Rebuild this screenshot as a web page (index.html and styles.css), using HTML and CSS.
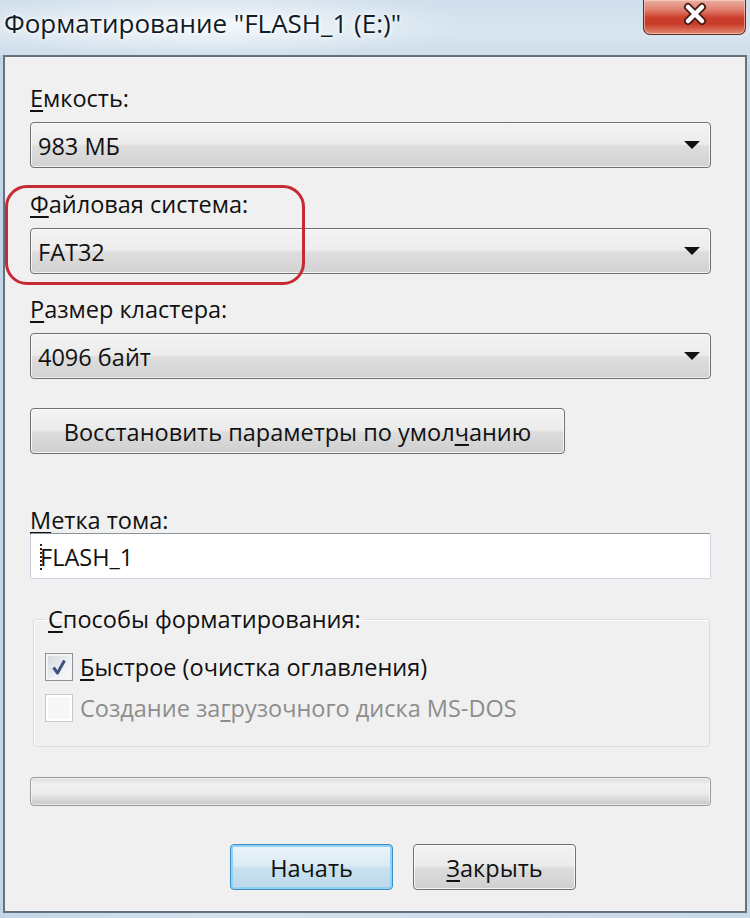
FILE: index.html
```html
<!DOCTYPE html>
<html lang="ru">
<head>
<meta charset="utf-8">
<title>Форматирование</title>
<link rel="stylesheet" href="styles.css">
</head>
<body>
<div class="window">
  <div class="titlebar">
    <span class="title">Форматирование "FLASH_1 (E:)"</span>
    <div class="close" aria-label="Закрыть">
      <svg width="30" height="24" viewBox="0 0 30 24">
        <path d="M8 5 L22 19 M22 5 L8 19" stroke="#4a1a16" stroke-width="8" stroke-linecap="round" fill="none"/>
        <path d="M8 5 L22 19 M22 5 L8 19" stroke="#ffffff" stroke-width="4.5" stroke-linecap="round" fill="none"/>
      </svg>
    </div>
  </div>
  <div class="client">
    <div class="field">
      <div class="label"><u>Е</u>мкость:</div>
      <div class="combo"><span class="combo-text">983 МБ</span><span class="arrow"></span></div>
    </div>
    <div class="field field-marked">
      <div class="label"><u>Ф</u>айловая система:</div>
      <div class="combo"><span class="combo-text">FAT32</span><span class="arrow"></span></div>
      <div class="highlight"></div>
    </div>
    <div class="field">
      <div class="label"><u>Р</u>азмер кластера:</div>
      <div class="combo"><span class="combo-text">4096 байт</span><span class="arrow"></span></div>
    </div>
    <div class="btn btn-reset">Восстановить параметры по умол<u>ч</u>анию</div>
    <div class="label label-volume"><u>М</u>етка тома:</div>
    <div class="textbox"><span class="caret"></span>FLASH_1</div>
    <fieldset class="group">
      <legend><u>С</u>пособы форматирования:</legend>
      <div class="check-row">
        <span class="checkbox checked">
          <svg width="20" height="20" viewBox="0 0 20 20"><path d="M4.5 10.5 L8.5 16 L15.5 3.5" stroke="#3d5380" stroke-width="3" fill="none" stroke-linejoin="round"/></svg>
        </span>
        <span class="check-label"><u>Б</u>ыстрое (очистка оглавления)</span>
      </div>
      <div class="check-row disabled">
        <span class="checkbox"></span>
        <span class="check-label">Создание за<u>г</u>рузочного диска MS-DOS</span>
      </div>
    </fieldset>
    <div class="progress"></div>
    <div class="actions">
      <div class="btn btn-default">Начать</div>
      <div class="btn btn-close"><u>З</u>акрыть</div>
    </div>
  </div>
</div>
</body>
</html>
```

FILE: styles.css
```css
* { box-sizing: border-box; }
html, body { margin: 0; padding: 0; }
body {
  width: 750px;
  height: 918px;
  overflow: hidden;
  font-family: "Open Sans", "Noto Sans", "DejaVu Sans", sans-serif;
  color: #111111;
  background: #cfdeeb;
}
u { text-decoration: underline; text-decoration-thickness: 2px; text-underline-offset: 3px; }

.window {
  width: 750px;
  height: 918px;
  display: flex;
  flex-direction: column;
  background: linear-gradient(90deg, #c3d6e7 0%, #d3e2ee 30%, #cddcea 70%, #c8d9e8 100%);
}

.titlebar {
  height: 55px;
  display: flex;
  align-items: flex-start;
  background:
    radial-gradient(ellipse 260px 34px at 210px 24px, rgba(255,255,255,0.75), rgba(255,255,255,0) 100%),
    linear-gradient(180deg, #d0dfec 0%, #d7e5f0 60%, #cfdeeb 100%);
}
.title {
  font-size: 26px;
  line-height: 30px;
  padding: 8px 0 0 4px;
  color: #101c28;
  text-shadow: 0 0 6px #ffffff, 0 0 3px #ffffff;
  white-space: nowrap;
}
.close {
  margin-left: auto;
  margin-right: 4px;
  width: 103px;
  height: 35px;
  border: 1px solid #5b2a24;
  border-top: none;
  border-radius: 0 0 7px 7px;
  background: linear-gradient(180deg, #eab0a2 0%, #e07d6c 30%, #cc3f2c 52%, #c73b28 70%, #e4896f 100%);
  box-shadow: inset 0 0 0 1px rgba(255,220,210,0.55);
  display: flex;
  align-items: center;
  justify-content: center;
  padding-bottom: 6px;
}

.client {
  flex: 1;
  margin: 0 3px 5px 3px;
  border: 2px solid #66727d;
  background: #f0f0f0;
  padding: 27px 34px 0 25px;
  display: flex;
  flex-direction: column;
  font-size: 23.5px;
}

.label {
  height: 28px;
  line-height: 28px;
  white-space: nowrap;
}
.field { position: relative; }
.field + .field { margin-top: 21.5px; }

.combo {
  margin-top: 10px;
  height: 46px;
  border: 1px solid #707070;
  border-radius: 4px;
  background: linear-gradient(180deg, #f3f3f3 0%, #ececec 48%, #dedede 52%, #d2d2d2 100%);
  box-shadow: inset 0 0 0 1px rgba(255,255,255,0.7);
  display: flex;
  align-items: center;
  padding: 2px 10px 0 7px;
}
.combo-text { flex: 1; line-height: 30px; }
.arrow {
  width: 0;
  height: 0;
  border-left: 8px solid transparent;
  border-right: 8px solid transparent;
  border-top: 8px solid #111;
  margin-top: -2px;
}

.highlight {
  position: absolute;
  left: -25px;
  top: -4.5px;
  width: 300px;
  height: 100px;
  border: 3px solid #c62a35;
  border-radius: 22px;
  pointer-events: none;
}

.btn {
  height: 46px;
  border: 1px solid #707070;
  border-radius: 4px;
  background: linear-gradient(180deg, #f3f3f3 0%, #ebebeb 48%, #dddddd 52%, #cfcfcf 100%);
  box-shadow: inset 0 0 0 1px rgba(255,255,255,0.75);
  display: flex;
  align-items: center;
  justify-content: center;
  white-space: nowrap;
  padding-top: 1px;
}
.btn-reset {
  margin-top: 29px;
  width: 535px;
}

.label-volume {
  margin-top: 52px;
  height: 27px;
}
.textbox {
  height: 46px;
  background: #ffffff;
  border: 1px solid #c9d6e2;
  border-top-color: #8c949c;
  border-left-color: #c4cfda;
  border-radius: 2px;
  display: flex;
  align-items: center;
  padding: 2px 0 0 9px;
  line-height: 30px;
}
.caret {
  width: 0;
  height: 26px;
  border-left: 2px dotted #222;
  margin-right: -2px;
}

.group {
  margin: 26px 0 0 3px;
  width: 677px;
  border: 1px solid #d5dfe5;
  border-radius: 3px;
  padding: 20px 0 24px 11px;
  box-shadow: 1px 1px 0 #ffffff inset;
  min-width: 0;
}
.group legend {
  padding: 0 3px;
  line-height: 28px;
  height: 28px;
  white-space: nowrap;
}
.check-row {
  display: flex;
  align-items: center;
  height: 28px;
  gap: 7px;
}
.check-row + .check-row { margin-top: 13px; }
.checkbox {
  width: 28px;
  height: 28px;
  flex: none;
  border: 1px solid #8e939a;
  background: linear-gradient(135deg, #d3d8de 0%, #eef0f3 60%, #fafafa 100%);
  box-shadow: inset 0 0 0 2px #f4f4f4;
  display: flex;
  align-items: center;
  justify-content: center;
}
.check-label { white-space: nowrap; line-height: 28px; }
.disabled .checkbox {
  border-color: #c8c8c8;
  background: #f7f7f7;
  box-shadow: inset 0 0 0 2px #ffffff;
}
.disabled .check-label { color: #8d8d8d; }

.progress {
  margin-top: 30px;
  height: 29px;
  border: 1px solid #9a9a9a;
  border-radius: 4px;
  background: linear-gradient(180deg, #dcdcdc 0%, #f2f2f2 25%, #ececec 55%, #d4d4d4 85%, #c8c8c8 100%);
  box-shadow: inset 0 0 0 1px rgba(255,255,255,0.6);
}

.actions {
  margin-top: 38px;
  display: flex;
  gap: 20px;
  padding-left: 200px;
}
.actions .btn { width: 163px; }
.btn-default {
  border-color: #3a8cc4;
  background: linear-gradient(180deg, #eaf4fa 0%, #dcebf4 48%, #c9e0ee 52%, #bcd9ea 100%);
  box-shadow: inset 0 0 0 2px #8fd2f4;
}
```
